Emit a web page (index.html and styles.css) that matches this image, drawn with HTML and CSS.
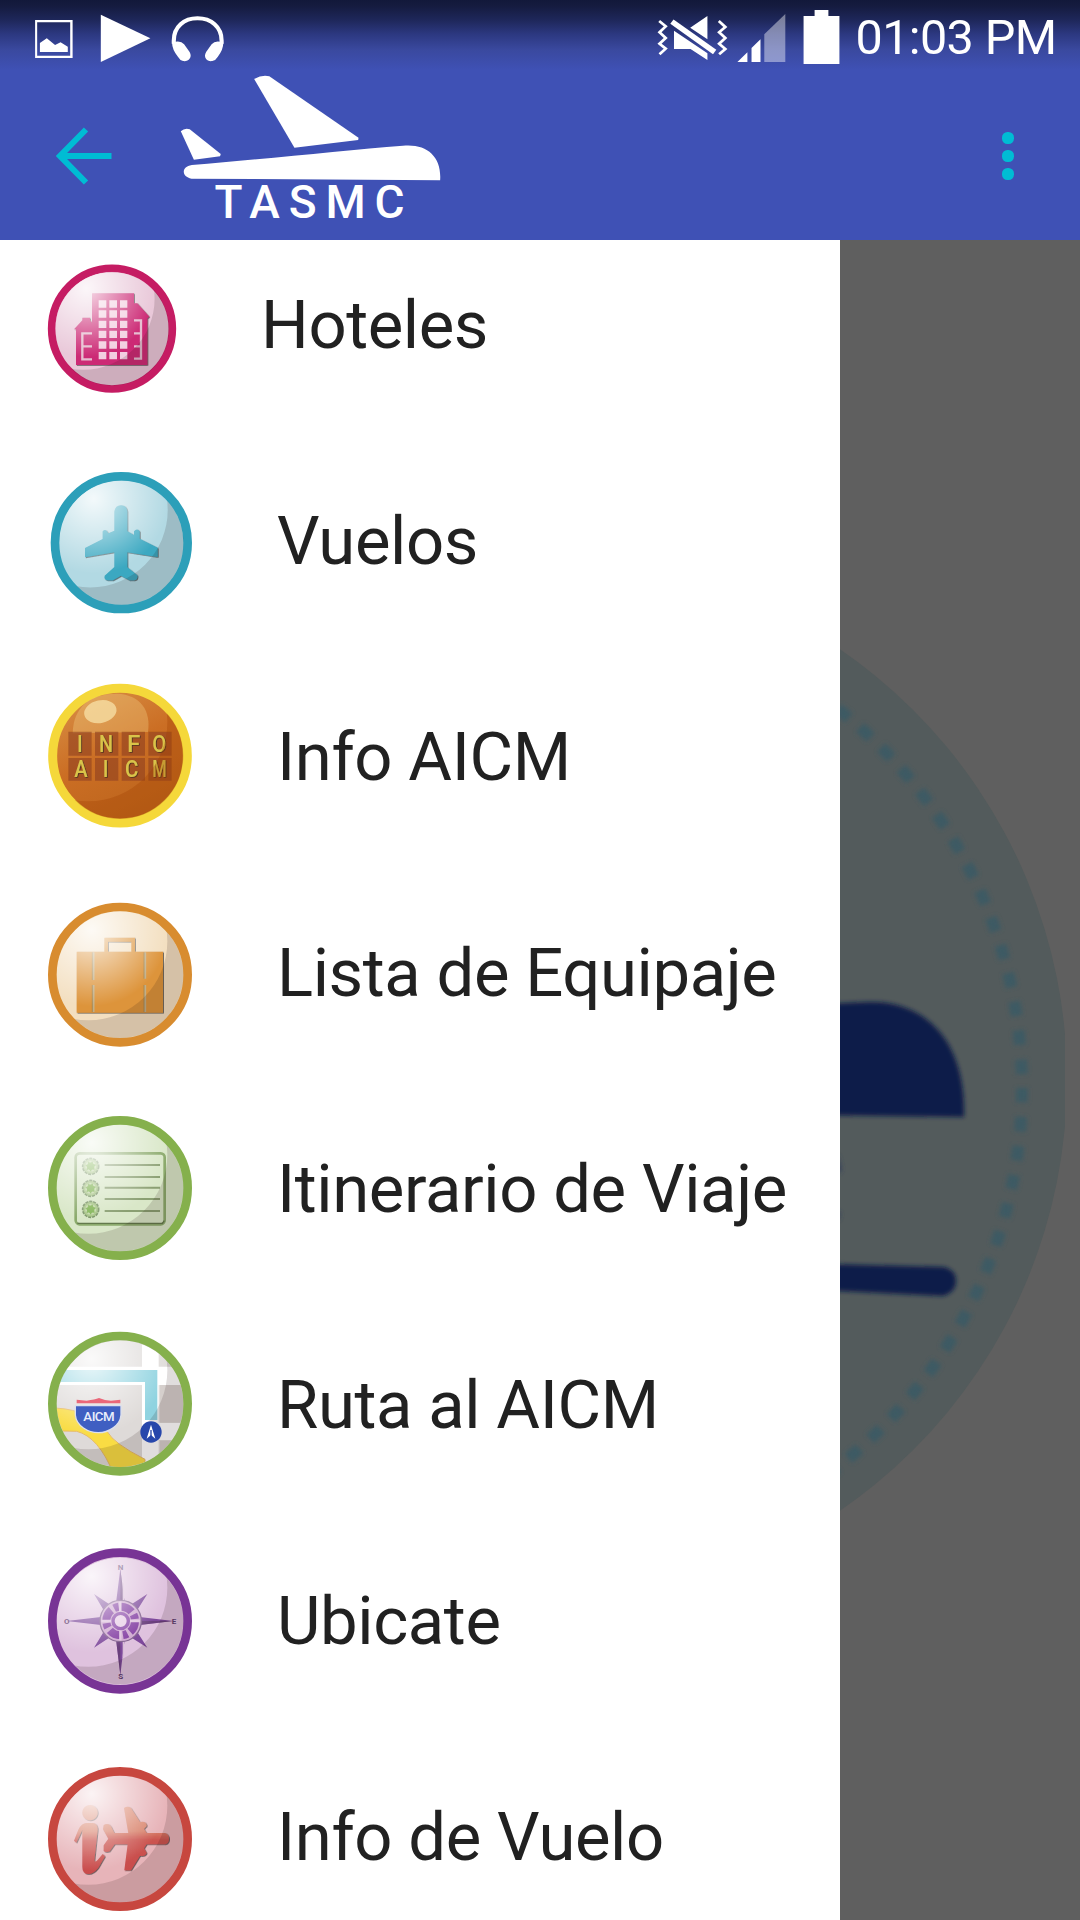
FILE: index.html
```html
<!DOCTYPE html>
<html lang="es">
<head>
<meta charset="utf-8">
<title>TASMC</title>
<link rel="stylesheet" href="styles.css">
</head>
<body>
<svg class="defs" width="0" height="0" aria-hidden="true">
  <defs>
    <clipPath id="disc"><circle r="190"/></clipPath>
    <radialGradient id="shine" gradientUnits="userSpaceOnUse" cx="-85" cy="-135" r="230">
      <stop offset="0" stop-color="#fff" stop-opacity=".85"/>
      <stop offset=".35" stop-color="#fff" stop-opacity=".55"/>
      <stop offset="1" stop-color="#fff" stop-opacity="0"/>
    </radialGradient>
    <g id="gloss" clip-path="url(#disc)">
      <circle r="190" fill="url(#shine)"/>
      <path d="M-250-250H250V250H-250ZM142-100A237 237 0 1 0-332-100A237 237 0 1 0 142-100Z" fill="#200c10" fill-opacity=".14" fill-rule="evenodd"/>
    </g>
    <filter id="soft"><feGaussianBlur stdDeviation="1.6"/></filter>
    <filter id="edge" x="-20%" y="-20%" width="140%" height="140%"><feDropShadow dx="2.5" dy="2" stdDeviation="1.6" flood-color="#222" flood-opacity=".75"/></filter>
  </defs>
</svg>

<header class="app-bar">
  <div class="status-bar">
    <svg class="status-left" viewBox="0 0 680 225" preserveAspectRatio="none" fill="#fff">
      <path d="M102 60H211V174H102ZM108 67V167H204V67Z" fill-rule="evenodd"/>
      <path d="M116 156V129L136 115L160 135L176 127L197 140V156Z"/>
      <path d="M293 44L437 115L293 186Z"/>
      <path d="M505 131V122C505 80 535 55 574 55S644 80 644 122V131" fill="none" stroke="#fff" stroke-width="12"/>
      <path d="M500 128Q524 119 535 133L551 156C561 174 545 186 532 183Q523 181 517 170Q500 148 500 128ZM649 128Q626 119 615 133L599 156C589 174 604 186 617 183Q627 181 633 170Q649 148 649 128Z"/>
    </svg>
    <div class="status-right">
      <svg class="status-icons" viewBox="330 0 560 225" preserveAspectRatio="none" fill="#fff">
        <path d="M345 63L364 79L346 97L364 114L346 131L364 146L346 163M518 63L537 81L519 97L537 114L519 131L537 147L519 163" fill="none" stroke="#fff" stroke-width="8"/>
        <path d="M382 65L506 156" stroke="#fff" stroke-width="16"/>
        <path d="M435 83L485 48V118ZM388 92L485 160V180L436 147H388Z"/>
        <path d="M572 186L601 157V186ZM613 186V144L639 118V186Z"/>
        <path d="M650 186V103L711 42V186Z" fill-opacity=".42"/>
        <path d="M764 48H796V30H836V48H868V192H764Z"/>
      </svg>
      <span class="clock">01:03 PM</span>
    </div>
  </div>
  <div class="toolbar">
    <svg class="back" viewBox="0 0 56 58" fill="none" stroke="#00bcd4" stroke-width="6"><path d="M55.500 29H6M30 2.500L4 29L30 55.500"/></svg>
    <svg class="logo" viewBox="170 70 280 160" fill="#fff">
      <g transform="scale(.34439 .33333)">
        <path d="M738 237Q762 223 782 229L1041 413L1040 420L855 443Z"/>
        <path d="M525 394Q536 383 551 388L641 462L639 469L563 479Z"/>
        <path d="M557 495C760 478 1000 451 1170 437C1240 430 1283 470 1278 541L556 536C526 530 526 500 557 495Z"/>
      </g>
      <text class="logo-name" x="214.500" y="218" textLength="190" lengthAdjust="spacing">TASMC</text>
    </svg>
    <svg class="more" viewBox="0 0 12 50" fill="#00bcd4"><rect width="12" height="12" y="1" rx="5.500"/><rect width="12" height="12" y="19" rx="5.500"/><rect width="12" height="12" y="37" rx="5.500"/></svg>
  </div>
</header>

<main class="content">
  <nav class="drawer">
    <ul class="menu">
      <li class="item item-first">
        <svg class="icon" viewBox="0 -99 540 648">
          <circle cx="246" cy="236" r="181" fill="#e9c8d9" stroke="#c51c63" stroke-width="23"/>
          <g filter="url(#edge)" fill="#cc2c74">
            <path d="M132 238L157 211V203H180V211L186 218V345H138V238Z"/><path d="M312 160H322L358 200L352 205V345H312Z"/><path d="M186 130H312V345H186Z"/>
          </g>
          <path d="M186 250H157V328H186M160 289H186M312 211H333V326H312M312 250H332M312 289H332" fill="none" stroke="#e5bdd0" stroke-width="7"/>
          <path d="M206 162H292M206 192H292M206 223H292M206 253H292M206 285H292M206 317H292" stroke="#f2cfe0" stroke-width="22" stroke-dasharray="23 9"/>
          <use href="#gloss" transform="translate(246 236) scale(.9)"/>
        </svg>
        <span class="label">Hoteles</span>
      </li>
      <li class="item">
        <svg class="icon" viewBox="0 -81 540 648">
          <circle cx="274" cy="248" r="199" fill="#b2d9e3" stroke="#2c9fb9" stroke-width="26"/>
          <path filter="url(#edge)" fill="#3aa8c1" d="M253 154Q256 136 273 136T292 154V214L312 225V214Q321 203 329 214V236L383 263V291L292 277V322L322 346Q325 361 311 361H298L273 347L249 361H234Q221 360 224 347L253 321V277L165 292V264L218 237V214Q227 203 235 220L253 212Z"/>
          <use href="#gloss" transform="translate(274 248) scale(.98)"/>
        </svg>
        <span class="label">Vuelos</span>
      </li>
      <li class="item">
        <svg class="icon" viewBox="0 -63 540 648">
          <defs><linearGradient id="amber" x2=".5" y2="1"><stop stop-color="#da944b"/><stop offset=".55" stop-color="#cb6e24"/><stop offset="1" stop-color="#bd651d"/></linearGradient></defs>
          <circle cx="270" cy="257" r="202" fill="url(#amber)" stroke="#f5d83a" stroke-width="27"/>
          <path d="M128 190C130 110 180 71 260 71C335 74 363 125 354 186Z" fill="#f5d68b" fill-opacity=".32"/>
          <ellipse cx="211" cy="125" rx="49" ry="34" transform="rotate(-12 211 125)" fill="#f6dda2" fill-opacity=".8"/>
          <path d="M115 185H185V257H115ZM195 185H265V257H195ZM275 185H345V257H275ZM355 185H425V257H355ZM115 264H185V332H115ZM195 264H265V332H195ZM275 264H345V332H275ZM355 264H425V332H355Z" fill="#8c3e20" fill-opacity=".58" filter="url(#soft)"/>
          <g class="board" filter="url(#edge)">
            <text x="141" y="246" textLength="17" lengthAdjust="spacingAndGlyphs">I</text><text x="207" y="246" textLength="42" lengthAdjust="spacingAndGlyphs">N</text><text x="291" y="246" textLength="40" lengthAdjust="spacingAndGlyphs">F</text><text x="367" y="246" textLength="42" lengthAdjust="spacingAndGlyphs">O</text>
            <text x="133" y="321" textLength="40" lengthAdjust="spacingAndGlyphs">A</text><text x="218" y="321" textLength="17" lengthAdjust="spacingAndGlyphs">I</text><text x="285" y="321" textLength="40" lengthAdjust="spacingAndGlyphs">C</text><text x="367" y="321" textLength="43" lengthAdjust="spacingAndGlyphs">M</text>
          </g>
          <g transform="translate(270 257)" clip-path="url(#disc)"><path d="M-250-250H250V250H-250ZM142-100A237 237 0 1 0-332-100A237 237 0 1 0 142-100Z" fill="#a04000" fill-opacity=".3" fill-rule="evenodd"/></g>
        </svg>
        <span class="label">Info AICM</span>
      </li>
      <li class="item">
        <svg class="icon" viewBox="0 -75 540 648">
          <circle cx="270" cy="254" r="203" fill="#f3dfc0" stroke="#d88c2f" stroke-width="26"/>
          <g filter="url(#edge)"><path fill="#dd943b" fill-rule="evenodd" d="M140 185H223V143H315V185H399V368H140ZM234 185H304V155H234Z"/></g>
          <path d="M190 187V270M190 285V366M345 187V266M345 285V366" stroke="#c1af88" stroke-width="7"/><path d="M187 187V270M187 285V366M342 187V266M342 285V366" stroke="#9c783f" stroke-width="2"/>
          <use href="#gloss" transform="translate(270 254)"/>
        </svg>
        <span class="label">Lista de Equipaje</span>
      </li>
      <li class="item">
        <svg class="icon" viewBox="0 -57 540 648">
          <circle cx="270" cy="264" r="203" fill="#d9e7c8" stroke="#85b04c" stroke-width="26"/>
          <rect x="137" y="160" width="267" height="213" rx="12" fill="none" stroke="#8baa6c" stroke-width="8" filter="url(#soft)"/>
          <path d="M142 370H397L403 362" fill="none" stroke="#63794c" stroke-width="4"/>
          <path d="M224 195H390M224 231H390M224 263H390M224 297H390M224 333H390" stroke="#8a9f72" stroke-width="6"/>
          <g fill="#a9c689" stroke="#7d966a" stroke-width="5" stroke-dasharray="9 3"><circle cx="182" cy="199" r="24"/><circle cx="182" cy="265" r="24"/><circle cx="182" cy="328" r="24"/></g>
          <g fill="#83b557" stroke="#c6d9ac" stroke-width="5" stroke-dasharray="7 5"><circle cx="182" cy="199" r="14"/><circle cx="182" cy="265" r="14"/><circle cx="182" cy="328" r="14"/></g>
          <use href="#gloss" transform="translate(270 264)"/>
        </svg>
        <span class="label">Itinerario de Viaje</span>
      </li>
      <li class="item">
        <svg class="icon" viewBox="0 -69 540 648">
          <circle cx="270" cy="251" r="203" fill="#e0dddb"/>
          <g transform="translate(270 251)" clip-path="url(#disc)"><g transform="translate(-270 -251)">
            <path d="M336 40H386V460H336ZM60 140H480V195H60ZM386 308H480V360H386Z" fill="#fff"/>
            <path d="M60 196H336V460H60Z" fill="#dedad8"/><path d="M390 195H480V308H390ZM390 362H480V460H390Z" fill="#d5cfcc"/>
            <path d="M60 150H382V300H345V186H60Z" fill="#8fd3e0"/>
            <path d="M60 265Q105 262 150 278L232 335Q250 370 345 418V460H250Q205 350 140 334Q100 330 60 338Z" fill="#f9dc43" stroke="#e7b963" stroke-width="3"/>
          </g></g>
          <use href="#gloss" transform="translate(270 251)"/>
          <path d="M136 257H273V285C271 317 235 338 205 338S139 318 136 285Z" fill="#3f5fc2" stroke="#dce0ed" stroke-width="4"/>
          <path d="M140 239L170 242Q195 239 207 234Q225 242 243 242L271 239V250H140Z" fill="#ea6779"/>
          <text class="shield" x="160" y="304" textLength="94">AICM</text>
          <circle cx="363" cy="336" r="32" fill="#2747ab"/><path d="M363 314L376 356L363 345L350 356Z" fill="#fff"/><path d="M363 330V350" stroke="#2747ab" stroke-width="4"/>
          <circle cx="270" cy="251" r="203" fill="none" stroke="#85b04c" stroke-width="26"/>
        </svg>
        <span class="label">Ruta al AICM</span>
      </li>
      <li class="item">
        <svg class="icon" viewBox="0 -81 540 648">
          <ellipse cx="270" cy="243" rx="203" ry="205" fill="#dfc2de" stroke="#783495" stroke-width="26"/>
          <g filter="url(#soft)">
            <path d="M271 86L286 205L352 162L310 229L430 243L310 257L352 323L286 281L271 405L256 281L192 323L232 257L110 243L232 229L192 162L256 205Z" fill="#7d489b"/>
            <path d="M271 86L286 205L271 226ZM430 243H320L310 257ZM271 405V281L256 281Z" fill="#5d3b69" fill-opacity=".6"/>
            <path d="M280 130V220M280 270V350" stroke="#d9bdd7" stroke-width="4"/>
            <circle cx="272" cy="243" r="62" fill="#cfa9d0" stroke="#81618e" stroke-width="4"/>
            <circle cx="272" cy="243" r="43" fill="none" stroke="#8441a3" stroke-width="24" stroke-dasharray="36 10 14 7.500"/>
            <path d="M271 185V301M214 243H330" stroke="#dfc4df" stroke-width="7"/>
            <circle cx="272" cy="243" r="23" fill="#e9d0e8" stroke="#8d4dab" stroke-width="10"/>
          </g>
          <g class="compass"><text x="272" y="89">N</text><text x="272" y="418">S</text><text x="432" y="251">E</text><text x="110" y="251">O</text></g>
          <use href="#gloss" transform="translate(270 243)"/>
        </svg>
        <span class="label">Ubicate</span>
      </li>
      <li class="item">
        <svg class="icon" viewBox="0 -63 540 648">
          <defs><linearGradient id="red" x2="0" y2="1"><stop stop-color="#dc8a73"/><stop offset=".38" stop-color="#d77f68"/><stop offset=".52" stop-color="#cb5450"/><stop offset="1" stop-color="#c94c4c"/></linearGradient></defs>
          <circle cx="270" cy="267" r="203" fill="#e7b4b9" stroke="#c7473f" stroke-width="26"/>
          <g fill="url(#red)" filter="url(#edge)">
            <path d="M180 165A23 23 0 1 1 179.900 165ZM132 272L145 239Q154 220 170 219H188Q203 220 203 239L193 331Q194 340 203 330L218 312L225 319L205 353Q190 372 174 372Q157 370 157 350V239L139 278Z"/>
            <path d="M221 225Q235 218 243 229L253 249H295L282 174Q292 167 303 174L330 216Q350 213 350 228L342 237L350 249H405Q417 252 417 266T405 283H350L342 295L350 309Q345 320 330 317L303 361H283L293 283H254L239 304Q228 309 221 303V286L235 266L219 238Z"/>
          </g>
          <use href="#gloss" transform="translate(270 267)"/>
        </svg>
        <span class="label">Info de Vuelo</span>
      </li>
    </ul>
  </nav>
  <div class="scrim">
    <svg class="backdrop" viewBox="840 240 240 1680">
      <defs><clipPath id="crop"><path d="M840 240H1065V1920H840Z"/></clipPath><filter id="haze" filterUnits="userSpaceOnUse" x="700" y="500" width="400" height="1200"><feGaussianBlur stdDeviation="2"/></filter></defs>
      <ellipse cx="540" cy="1080" rx="527" ry="524" fill="#535b5c" clip-path="url(#crop)"/>
      <g filter="url(#haze)">
        <circle cx="540" cy="1088" r="482" fill="none" stroke="#3d5a63" stroke-width="12" stroke-dasharray="14.500 14.620"/>
        <path d="M820 1004L868 1002C920 1000 966 1035 964 1117L820 1115Z" fill="#0f1d49"/>
        <path d="M820 1264L944 1267Q956 1270 956 1281T943 1296L820 1290Z" fill="#0f1d49"/>
        <path d="M838 1153L842 1170L838 1174ZM838 1210L841 1214L838 1222Z" fill="#364058"/>
      </g>
    </svg>
  </div>
</main>
</body>
</html>
```

FILE: styles.css
```css
* { box-sizing: border-box; }

body {
  margin: 0;
  width: 1080px;
  height: 1920px;
  overflow: hidden;
  display: flex;
  flex-direction: column;
  background: #fff;
  font-family: Roboto, "Noto Sans", sans-serif;
}

svg { display: block; flex: none; }

.defs { height: 0; }

.app-bar {
  height: 240px;
  flex: none;
  background: linear-gradient(#12183a 0, #151b3f 6px, #1e275a 20px, #2c3880 34px, #3a499f 50px, #3f51b5 70px);
}

.status-bar {
  height: 75px;
  display: flex;
  justify-content: space-between;
}

.status-left { width: 234px; height: 75px; }

.status-right {
  display: flex;
  align-items: center;
  padding-right: 19px;
}

.status-icons { width: 193px; height: 75px; }

.clock {
  width: 214.5px;
  padding-left: 9px;
  color: #fff;
  font-size: 48.5px;
  line-height: 75px;
  letter-spacing: -0.6px;
  white-space: nowrap;
}

.toolbar {
  height: 165px;
  display: flex;
  align-items: center;
  padding: 0 66px 0 56px;
}

.back { width: 56px; height: 58px; margin-bottom: 3px; }

.logo {
  width: 280px;
  height: 160px;
  margin-left: 58px;
  margin-top: -15px;
}

.logo-name { font-size: 46px; font-weight: 500; }

.more { width: 12px; height: 50px; margin-left: auto; margin-bottom: 3px; }

.content {
  flex: 1;
  min-height: 0;
  display: flex;
  overflow: hidden;
}

.drawer {
  width: 840px;
  flex: none;
  background: #fff;
}

.menu {
  list-style: none;
  margin: -23px 0 0;
  padding: 0;
}

.item {
  height: 216px;
  display: flex;
  align-items: center;
  gap: 67px;
  padding-left: 30px;
}

.item-first { gap: 51px; }

.icon { width: 180px; height: 216px; }

.label {
  color: #212121;
  font-size: 67px;
  line-height: 80px;
  letter-spacing: -0.4px;
  white-space: nowrap;
}

.board text {
  fill: #d9c44a;
  font: 500 70px Roboto, sans-serif;
}

.shield { fill: #e9eefc; font-size: 40px; font-weight: 500; }

.compass text {
  fill: #5f4070;
  font: 700 24px Roboto, sans-serif;
  text-anchor: middle;
}

.scrim { flex: 1; background: #5f5f5f; }

.backdrop { width: 240px; height: 1680px; }
```
